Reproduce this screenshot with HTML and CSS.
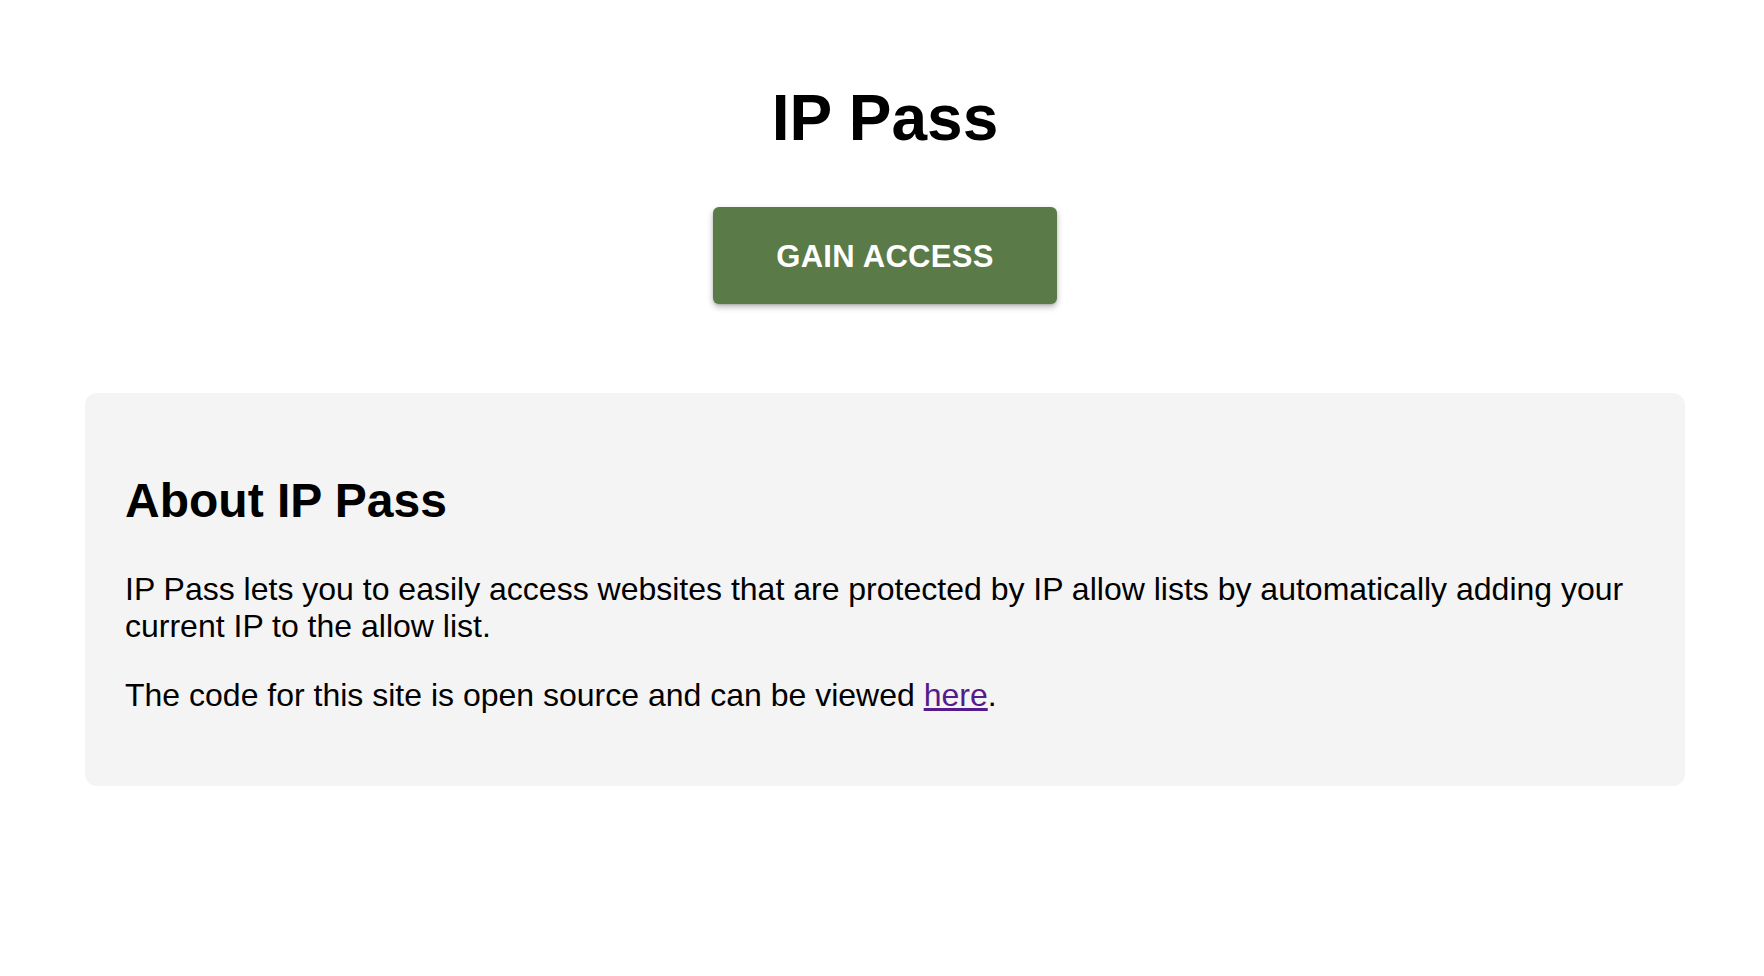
FILE: index.html
```html
<!DOCTYPE html>
<html lang="en">
<head>
<meta charset="utf-8">
<title>IP Pass</title>
<link rel="stylesheet" href="styles.css">
</head>
<body>
<div class="page">
  <header class="hero">
    <h1 class="title">IP Pass</h1>
    <button class="gain-btn" type="button">GAIN ACCESS</button>
  </header>
  <section class="about">
    <h2 class="about-title">About IP Pass</h2>
    <p class="about-text">IP Pass lets you to easily access websites that are protected by IP allow lists by automatically adding your current IP to the allow list.</p>
    <p class="about-text">The code for this site is open source and can be viewed <a class="link" href="#">here</a>.</p>
  </section>
</div>
</body>
</html>
```

FILE: styles.css
```css
html, body {
  margin: 0;
  padding: 0;
  background: #ffffff;
}

body {
  font-family: "Liberation Sans", Arial, Helvetica, sans-serif;
  color: #000000;
}

.page {
  padding: 81px 0 0 6px;
  display: flex;
  flex-direction: column;
  align-items: center;
}

.hero {
  display: flex;
  flex-direction: column;
  align-items: center;
}

.title {
  margin: 0;
  font-size: 64px;
  font-weight: 700;
  line-height: normal;
}

.gain-btn {
  margin-top: 52px;
  width: 344px;
  height: 97px;
  border: none;
  border-radius: 6px;
  background: #5a7a48;
  color: #ffffff;
  font-family: "Liberation Sans", Arial, Helvetica, sans-serif;
  font-size: 31px;
  font-weight: 700;
  letter-spacing: 0.3px;
  display: flex;
  align-items: center;
  justify-content: center;
  padding: 2px 0 0;
  box-shadow: 0 3px 6px rgba(0, 0, 0, 0.28), 0 1px 2px rgba(0, 0, 0, 0.12);
  cursor: pointer;
}

.about {
  margin-top: 89px;
  width: 1600px;
  box-sizing: border-box;
  padding: 40px;
  background: #f4f4f4;
  border-radius: 12px;
}

.about-title {
  margin: 40px 0 43px;
  font-size: 48px;
  font-weight: 700;
  line-height: normal;
}

.about-text {
  margin: 32px 0;
  font-size: 32px;
  line-height: normal;
}

.link {
  color: #551a8b;
  text-decoration: underline;
}
```
